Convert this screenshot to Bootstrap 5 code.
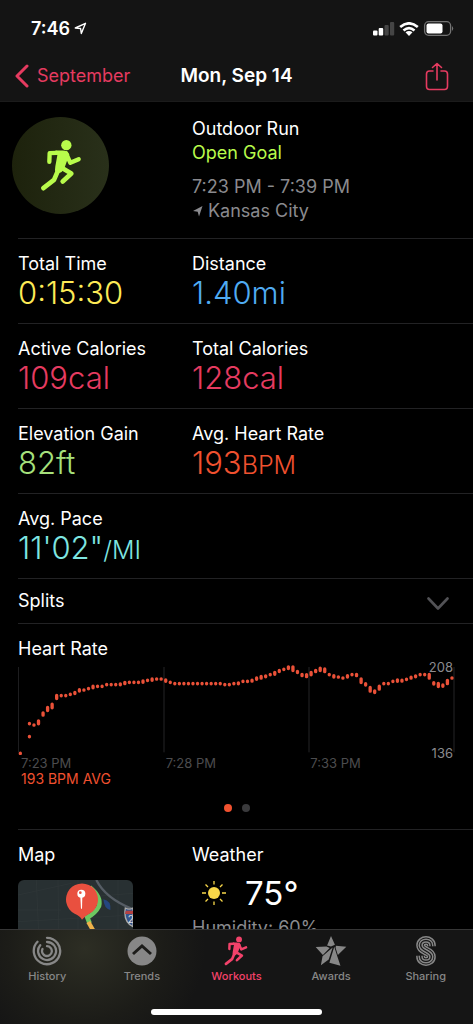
<!DOCTYPE html>
<html lang="en" data-bs-theme="dark">
<head>
<meta charset="utf-8">
<meta name="viewport" content="width=device-width, initial-scale=1">
<title>Workout - Mon, Sep 14</title>
<link href="https://cdn.jsdelivr.net/npm/bootstrap@5.3.0/dist/css/bootstrap.min.css" rel="stylesheet">
<style>
  body { background: #000; color: #fff; font-family: Inter, "Liberation Sans", sans-serif; font-size: 18px; line-height: 24px; }
  a { text-decoration: none; }
  svg { display: block; flex: none; }
  .top-area { background: #141414; border-bottom: 1px solid #1b1b1b; }
  .status-line { height: 51px; padding: 6px 19px 0 31px; }
  .nav-line { display: grid; grid-template-columns: 1fr auto 1fr; height: 50px; padding: 0 15px; align-items: center; }
  .nav-title { font-size: 19px; line-height: 24px; }
  .share { margin-right: 9px; }
  .pink { color: #e63b60; }
  .scroller { overflow-y: auto; scrollbar-width: none; min-height: 0; }
  .scroller::-webkit-scrollbar { display: none; }
  .sheet { padding-left: 18px; }
  .rule { border-bottom: 1px solid #222224; }
  .pair { display: grid; grid-template-columns: 174fr 281fr; }
  .summary { padding: 15px 0; }
  .avatar { width: 97px; height: 97px; margin-left: -6px; background: linear-gradient(90deg, #1d220c, #29301a); }
  .soft { color: #8a8a8e; }
  .when { padding-top: 10px; }
  .metric { height: 85px; padding-top: 13px; }
  .metric dt { font-weight: 400; }
  .metric dd { margin: 0; font-size: 31px; line-height: 34px; font-weight: 300; }
  .unit { font-size: 25px; }
  .yellow { color: #fdea56; } .blue { color: #4fabf2; } .lime { color: #a6e07c; }
  .orange { color: #f0512f; } .aqua { color: #7ee6e2; } .neon { color: #b8fb4b; }
  .splits { height: 45px; padding: 0 24px 0 0; color: #fff; }
  .chart-block { padding: 13px 18px 0 0; height: 206px; }
  .chart-label { font-size: 13px; line-height: 16px; }
  .times { display: grid; grid-template-columns: repeat(3, 1fr); padding-left: 3px; color: #4c4c4e; }
  .average { padding-left: 3px; font-size: 14px; line-height: 16px; }
  .range-high, .range-low { position: absolute; right: 2px; }
  .range-high { top: -6px; } .range-low { bottom: -6px; }
  .pager { gap: 10px; padding-top: 17px; }
  .pager button { width: 8px; height: 8px; padding: 0; border: 0; border-radius: 50%; background: #3a3a3c; }
  .pager .current { background: #f0512f; }
  .extras { padding: 13px 0; }
  .map-thumb { width: 115px; border-radius: 6px; margin-top: 13px; }
  .weather-now { gap: 17px; padding: 9px 0 6px 8px; font-size: 33px; line-height: 34px; }
  .tab-area { background: radial-gradient(ellipse 120px 110px at 18% 20%, #2d2e24, #1c1c18 65%, #151515 100%) #151515; border-top: 1px solid #363636; height: 95px; }
  .tab { flex: 1 1 0; color: #878787; font-size: 11px; line-height: 14px; font-weight: 500; padding-top: 6px; gap: 3px; }
  .tab.active { color: #f2426a; }
  .home-bar { width: 36%; height: 6px; margin-bottom: 9px; background: #fff; }
</style>
</head>
<body class="vh-100 d-flex flex-column overflow-hidden">
<svg class="d-none" aria-hidden="true">
  <symbol id="runner" viewBox="92 68 126 158">
    <g fill="none" stroke="currentColor" stroke-linecap="round" stroke-linejoin="round" stroke-width="13">
      <path d="M142 109L121 110L120 136M170 110L183 139L208 128"/>
      <path d="M147 160L134 190L102 215M157 154L186 171L160 195" stroke-width="14"/>
    </g>
    <circle cx="171" cy="86" r="15.500" fill="currentColor"/>
    <path d="M138 102H160Q174 103 180 114L167 150Q162 165 152 169L140 170Q135 160 138 149L144 116Z" fill="currentColor"/>
  </symbol>
</svg>

<header class="top-area flex-shrink-0">
  <div class="status-line d-flex align-items-center justify-content-between">
    <div class="d-flex align-items-center gap-1 fw-semibold">7:46
      <svg width="13" height="13" viewBox="0 0 13 13" fill="none" stroke="#fff" stroke-width="1.4" stroke-linejoin="round"><path d="M11.5 1.3L7.3 11.5L6.6 6.5L1.3 6Z"/></svg>
    </div>
    <div class="d-flex align-items-center">
      <svg width="22" height="14" viewBox="0 0 22 14"><g fill="#fff"><rect y="8.5" width="4.5" height="5" rx="1"/><rect x="5.7" y="6" width="4.5" height="7.5" rx="1"/></g><g fill="#454545"><rect x="11.5" y="3" width="4.2" height="10.5" rx="1"/><rect x="17" y="0" width="4.2" height="13.5" rx="1"/></g></svg>
      <svg class="ms-1" width="20" height="14" viewBox="0 0 20 14" fill="none" stroke="#fff" stroke-width="2.6"><path d="M1.2 5.1Q10 -2.5 18.8 5.1M4.5 8.5Q10 3.8 15.5 8.5"/><path d="M6.5 10.3Q10 7.5 13.5 10.3L10 14Z" fill="#fff" stroke="none"/></svg>
      <svg class="ms-1" width="31" height="15" viewBox="0 0 31 15"><rect x="1.6" y=".7" width="26" height="13.6" rx="4" fill="none" stroke="#737373" stroke-width="1.3"/><rect x="3.5" y="2.6" width="16" height="9.8" rx="2" fill="#fff"/><path d="M29 5Q31.4 7.5 29 10Z" fill="#737373"/></svg>
    </div>
  </div>
  <nav class="nav-line">
    <a href="#september" class="pink d-flex align-items-center gap-2">
      <svg width="14" height="24" viewBox="0 0 14 24" fill="none" stroke="currentColor" stroke-width="3" stroke-linecap="round" stroke-linejoin="round"><path d="M12 2L2 12L12 22"/></svg>September</a>
    <h1 class="nav-title m-0 fw-semibold">Mon, Sep 14</h1>
    <button type="button" class="btn share p-0 border-0 pink ms-auto" aria-label="Share">
      <svg width="24" height="29" viewBox="0 0 24 29" fill="none" stroke="currentColor" stroke-width="1.6" stroke-linecap="round" stroke-linejoin="round"><path d="M8 9H4.5Q1.5 9 1.5 12V24Q1.5 27.500 4.5 27.500H19.500Q22.500 27.500 22.500 24V12Q22.500 9 19.500 9H16M12 18V1.500M7.500 5.500L12 1.500L16.500 5.500"/></svg>
    </button>
  </nav>
</header>

<main class="scroller flex-grow-1">
  <div class="sheet">
    <section class="pair rule summary">
      <div class="avatar rounded-circle d-flex align-items-center justify-content-center neon"><svg width="42" height="53"><use href="#runner"/></svg></div>
      <div>
        <div>Outdoor Run</div>
        <div class="neon">Open Goal</div>
        <div class="soft when">7:23 PM - 7:39 PM</div>
        <div class="soft d-flex align-items-center gap-1"><svg width="12" height="12" viewBox="0 0 12 12" fill="currentColor"><path d="M10.500 1L7 11.500L5.700 6.700L1 6Z"/></svg>Kansas City</div>
      </div>
    </section>
    <dl class="m-0">
      <div class="pair rule metric">
        <div><dt>Total Time</dt><dd class="yellow">0:15:30</dd></div>
        <div><dt>Distance</dt><dd class="blue">1.40mi</dd></div>
      </div>
      <div class="pair rule metric">
        <div><dt>Active Calories</dt><dd class="pink">109cal</dd></div>
        <div><dt>Total Calories</dt><dd class="pink">128cal</dd></div>
      </div>
      <div class="pair rule metric">
        <div><dt>Elevation Gain</dt><dd class="lime">82ft</dd></div>
        <div><dt>Avg. Heart Rate</dt><dd class="orange">193<span class="unit">BPM</span></dd></div>
      </div>
      <div class="pair rule metric">
        <div><dt>Avg. Pace</dt><dd class="aqua">11'02"<span class="unit">/MI</span></dd></div>
      </div>
    </dl>
    <button type="button" class="splits rule w-100 bg-transparent border-top-0 border-start-0 border-end-0 d-flex align-items-center justify-content-between">Splits
      <svg class="mt-1" width="22" height="13" viewBox="0 0 22 13" fill="none" stroke="#525256" stroke-width="2.600" stroke-linecap="round" stroke-linejoin="round"><path d="M1.500 1.500L11 11.500L20.500 1.500"/></svg>
    </button>
    <section class="chart-block rule">
      <div>Heart Rate</div>
      <div class="position-relative mt-1">
        <svg class="w-100" viewBox="0 0 1311 270" role="img" aria-label="Heart rate over time">
          <path d="M1 6V262M438 6V262M873 6V262M1308 6V262" stroke="#242426" stroke-width="3"/>
          <path id="beats" fill="none" stroke="#ea5138" stroke-width="10" stroke-linecap="round"/>
        </svg>
        <div class="range-high chart-label soft">208</div>
        <div class="range-low chart-label soft">136</div>
      </div>
      <div class="times chart-label"><span>7:23 PM</span><span>7:28 PM</span><span>7:33 PM</span></div>
      <div class="orange average">193 BPM AVG</div>
      <div class="pager d-flex justify-content-center"><button type="button" class="current" aria-label="Chart 1"></button><button type="button" aria-label="Chart 2"></button></div>
    </section>
    <section class="pair extras">
      <div>
        <div>Map</div>
        <svg class="map-thumb" viewBox="0 0 345 345" role="img" aria-label="Route map">
          <rect width="345" height="345" fill="#283032"/>
          <path d="M0 45L160 10M0 90H130M55 0L70 345M120 0L125 345M0 125L345 105M180 0V345M300 0V345M220 50L345 40" stroke="#30383a" stroke-width="2" fill="none"/>
          <path d="M235 0Q262 55 345 88" stroke="#565d65" stroke-width="7" fill="none"/>
          <path d="M256 58Q280 62 277 90Q258 86 256 58Z" fill="#254680"/>
          <path d="M322 84Q335 91 345 84V140Q315 125 322 84Z" fill="#34558d" stroke="#aaa" stroke-width="4"/>
          <path d="M323 92H345V102H321Z" fill="#b44242"/>
          <text x="329" y="128" fill="#ddd" font-size="30">2</text>
          <path d="M215 22Q250 50 243 78Q232 100 208 112L215 130" stroke="#6dc661" stroke-width="14" fill="none"/>
          <path d="M211 126L225 150" stroke="#eeb14a" stroke-width="13"/>
          <path d="M192 119Q187 108 170 101A48 48 0 1 1 214 101Q199 108 192 119Z" fill="#e9503f"/>
          <path d="M187 50H193L192 86H189Z" fill="#fff"/><circle cx="190" cy="41" r="12" fill="#fff"/><circle cx="187" cy="38" r="4" fill="#e9503f"/>
        </svg>
      </div>
      <div>
        <div>Weather</div>
        <div class="weather-now d-flex align-items-center">
          <svg width="28" height="28" viewBox="0 0 28 28"><circle cx="14" cy="14" r="6" fill="#f8d749"/><path d="M14 2V5.500M14 22.500V26M2 14H6M22 14H26M5.500 5.500L8 8M20 20L22.500 22.500M22.500 5.500L20 8M5.500 22.500L8 20" stroke="#f8d749" stroke-width="1.300"/></svg>75°</div>
        <div class="soft">Humidity: 60%</div>
      </div>
    </section>
  </div>
</main>

<footer class="tab-area flex-shrink-0 d-flex flex-column justify-content-between align-items-center">
  <nav class="d-flex w-100">
    <a href="#history" class="tab d-flex flex-column align-items-center">
      <svg width="30" height="30" viewBox="0 0 30 30" fill="none" stroke="currentColor" stroke-width="2.300" stroke-linecap="round"><path d="M15 1.800A13.200 13.200 0 1 1 5.500 5.800M15 6A9 9 0 1 1 8.200 9.200M15 10.200A4.900 4.900 0 1 1 10.500 13"/></svg>History</a>
    <a href="#trends" class="tab d-flex flex-column align-items-center">
      <svg width="30" height="30" viewBox="0 0 30 30"><circle cx="15" cy="15" r="14.500" fill="currentColor"/><path d="M6 18L15 10L24 18" fill="none" stroke="#1c1c1a" stroke-width="3"/></svg>Trends</a>
    <a href="#workouts" class="tab active d-flex flex-column align-items-center" aria-current="page"><svg width="30" height="30"><use href="#runner"/></svg>Workouts</a>
    <a href="#awards" class="tab d-flex flex-column align-items-center">
      <svg width="32" height="30" viewBox="0 0 96 92" fill="currentColor"><path d="M48 0L60 27L48 32L36 29ZM1 34L34 32L44 37L23 58ZM63 30L95 33L69 58L62 36ZM22 62L53 35L41 72L17 90ZM58 33L67 61L77 91L43 82Z"/></svg>Awards</a>
    <a href="#sharing" class="tab d-flex flex-column align-items-center">
      <svg width="20" height="30" viewBox="0 0 60 90" fill="none">
        <path d="M46 31V28C46 9 14 9 14 28C14 47 46 43 46 62C46 81 14 81 14 62V59" stroke="currentColor" stroke-width="27"/>
        <path d="M46 32V28C46 9 14 9 14 28C14 47 46 43 46 62C46 81 14 81 14 62V58" stroke="#151515" stroke-width="18"/>
        <path d="M46 31V28C46 9 14 9 14 28C14 47 46 43 46 62C46 81 14 81 14 62V59" stroke="currentColor" stroke-width="13"/>
        <path d="M46 32V28C46 9 14 9 14 28C14 47 46 43 46 62C46 81 14 81 14 62V58" stroke="#151515" stroke-width="4"/>
      </svg>Sharing</a>
  </nav>
  <div class="home-bar rounded-pill"></div>
</footer>

<script>
  // Each reading: [sample index, centre, height of the min-max range]
  const first = [[0,517,8],[2,428,8],[2,467,8],[3,432,8],[4,424,18],[5,399,16],[6,384,18],[7,375,20],[8,348,18]];
  const centres = [344,344,340,336,328,327,323,318,316,316,311,311,311,310,306,304,304,304,302,298,296,294,294,299,304,
    308,308,308,308,308,308,308,308,308,308,308,311,311,308,307,301,301,299,293,289,286,281,277,270,265,260,263,273,282,
    284,278,270,265,268,281,286,288,291,286,281,282,299,310,325,332,320,308,308,301,299,299,295,290,286,281,281,286,307,312,314,303,291];
  const tall = {12:12,13:13,16:14,22:12,23:13,27:13,29:13,32:13,48:12,51:12,52:13,53:14,54:12,56:15,57:12,59:14,60:20,61:12,62:13,63:15,
    64:16,65:13,66:16,67:17,69:13,72:13,74:13,75:20,76:13,77:20,78:14,79:18,83:13,84:12,86:12,87:12,90:20,91:13,92:18,93:13,94:19};
  const readings = first.concat(centres.map((y, k) => [k + 9, y, tall[k + 9] || 9]));
  document.getElementById('beats').setAttribute('d', readings.map(([i, y, h]) => {
    const half = Math.max(h - 9, 1) / 2, x = 7 + i * 13.63, c = y - 252;
    return `M${x.toFixed(1)} ${c - half}V${c + half}`;
  }).join(''));
</script>
<script src="https://cdn.jsdelivr.net/npm/bootstrap@5.3.0/dist/js/bootstrap.bundle.min.js"></script>
</body>
</html>
